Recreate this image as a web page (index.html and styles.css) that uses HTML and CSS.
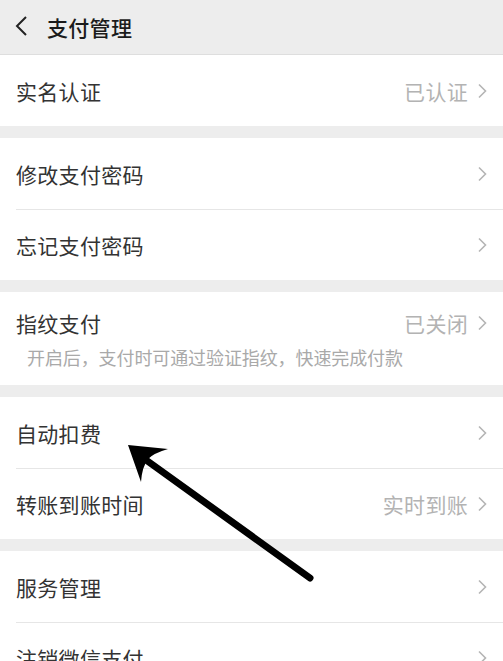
FILE: index.html
```html
<!DOCTYPE html>
<html lang="zh-CN">
<head>
<meta charset="utf-8">
<title>支付管理</title>
<link rel="stylesheet" href="styles.css">
</head>
<body>
<div class="page">
  <header class="topbar">
    <svg class="back" width="14" height="22" viewBox="0 0 14 22"><path d="M12 2 L3 11 L12 20" fill="none" stroke="#222" stroke-width="2" stroke-linejoin="miter"/></svg>
    <span class="title">支付管理</span>
  </header>

  <section class="group">
    <div class="row"><div class="inner"><span class="label">实名认证</span><span class="value">已认证</span><svg class="chev" width="10" height="16" viewBox="0 0 10 16"><path d="M2 1.5 L8.5 8 L2 14.5" fill="none" stroke="#b5b5b5" stroke-width="1.6"/></svg></div></div>
  </section>

  <section class="group">
    <div class="row"><div class="inner"><span class="label">修改支付密码</span><span class="value"></span><svg class="chev" width="10" height="16" viewBox="0 0 10 16"><path d="M2 1.5 L8.5 8 L2 14.5" fill="none" stroke="#b5b5b5" stroke-width="1.6"/></svg></div></div>
    <div class="row"><div class="inner"><span class="label">忘记支付密码</span><span class="value"></span><svg class="chev" width="10" height="16" viewBox="0 0 10 16"><path d="M2 1.5 L8.5 8 L2 14.5" fill="none" stroke="#b5b5b5" stroke-width="1.6"/></svg></div></div>
  </section>

  <section class="group">
    <div class="row tall">
      <div class="inner stack">
        <div class="line"><span class="label">指纹支付</span><span class="value">已关闭</span><svg class="chev" width="10" height="16" viewBox="0 0 10 16"><path d="M2 1.5 L8.5 8 L2 14.5" fill="none" stroke="#b5b5b5" stroke-width="1.6"/></svg></div>
        <div class="desc">开启后，支付时可通过验证指纹，快速完成付款</div>
      </div>
    </div>
  </section>

  <section class="group">
    <div class="row"><div class="inner"><span class="label">自动扣费</span><span class="value"></span><svg class="chev" width="10" height="16" viewBox="0 0 10 16"><path d="M2 1.5 L8.5 8 L2 14.5" fill="none" stroke="#b5b5b5" stroke-width="1.6"/></svg></div></div>
    <div class="row"><div class="inner"><span class="label">转账到账时间</span><span class="value">实时到账</span><svg class="chev" width="10" height="16" viewBox="0 0 10 16"><path d="M2 1.5 L8.5 8 L2 14.5" fill="none" stroke="#b5b5b5" stroke-width="1.6"/></svg></div></div>
  </section>

  <section class="group">
    <div class="row"><div class="inner"><span class="label">服务管理</span><span class="value"></span><svg class="chev" width="10" height="16" viewBox="0 0 10 16"><path d="M2 1.5 L8.5 8 L2 14.5" fill="none" stroke="#b5b5b5" stroke-width="1.6"/></svg></div></div>
    <div class="row"><div class="inner"><span class="label">注销微信支付</span><span class="value"></span><svg class="chev" width="10" height="16" viewBox="0 0 10 16"><path d="M2 1.5 L8.5 8 L2 14.5" fill="none" stroke="#b5b5b5" stroke-width="1.6"/></svg></div></div>
  </section>

  <svg class="arrow" width="503" height="661" viewBox="0 0 503 661">
    <line x1="146" y1="460" x2="310" y2="578" stroke="#000" stroke-width="7" stroke-linecap="round"/>
    <path d="M128 445 L168 449 Q154 453 148 459 Q142 467 141 482 Z" fill="#000"/>
  </svg>
</div>
</body>
</html>
```

FILE: styles.css
```css
html, body {
  margin: 0;
  padding: 0;
  background: #ededed;
  overflow: hidden;
}
body {
  font-family: "Noto Sans CJK SC", "Noto Sans", sans-serif;
  width: 503px;
  height: 661px;
}
.page {
  position: relative;
  width: 503px;
  height: 661px;
  overflow: hidden;
}
.topbar {
  height: 54px;
  border-bottom: 1px solid #dedede;
  background: #ededed;
  display: flex;
  align-items: center;
  padding-left: 14px;
  box-sizing: content-box;
}
.back {
  display: block;
  margin-right: 19px;
  margin-top: -2px;
}
.title {
  font-size: 21px;
  font-weight: 500;
  color: #1b1b1b;
  letter-spacing: 0.3px;
}
.group {
  background: #fff;
  margin-bottom: 12px;
}
.row {
  padding-left: 16px;
}
.inner {
  height: 71px;
  display: flex;
  align-items: center;
  padding-right: 16px;
  box-sizing: border-box;
}
.row + .row .inner {
  border-top: 1px solid #e6e6e6;
}
.label {
  font-size: 21px;
  color: #333;
  flex: 1;
  letter-spacing: 0.3px;
}
.value {
  font-size: 21px;
  color: #b3b3b3;
  margin-right: 9px;
  letter-spacing: 0.3px;
}
.chev {
  display: block;
}
.tall .inner {
  height: 93px;
}
.stack {
  flex-direction: column;
  align-items: stretch;
  justify-content: flex-start;
  padding-top: 17px;
}
.line {
  display: flex;
  align-items: center;
  height: 28px;
}
.desc {
  font-size: 18px;
  color: #a9a9a9;
  margin-top: 8px;
  margin-left: 11px;
  line-height: 24px;
  letter-spacing: -0.1px;
}
.arrow {
  position: absolute;
  left: 0;
  top: 0;
  pointer-events: none;
}
```
